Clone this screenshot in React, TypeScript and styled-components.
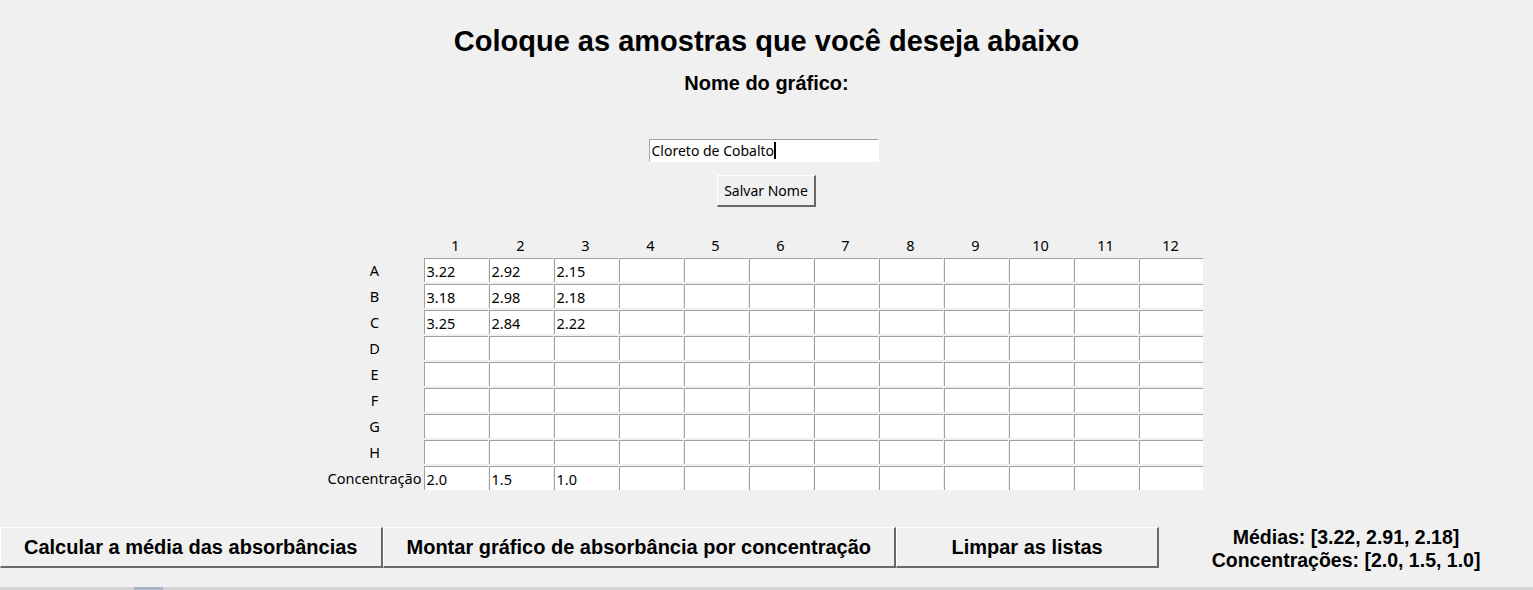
import * as React from 'react';
import styled, { createGlobalStyle } from 'styled-components';

const GlobalStyle = createGlobalStyle`
  html, body {
    margin: 0;
    padding: 0;
    background: #f0f0f0;
  }
`

const Window = styled.div`
  height: 590px;
  display: flex;
  flex-direction: column;
  align-items: center;
  background: #f0f0f0;
  overflow: hidden;
  font-family: "Liberation Sans", Arial, sans-serif;
  color: #000;
`

const Title = styled.h1`
  margin: 24px 0 0 0;
  font-size: 29px;
  line-height: 34px;
  font-weight: bold;
`

const Subtitle = styled.div`
  margin-top: 13px;
  font-size: 20px;
  line-height: 24px;
  font-weight: bold;
`

const NameField = styled.div`
  margin-top: 44px;
  margin-right: 6px;
  width: 230px;
  height: 23px;
  box-sizing: border-box;
  background: #fff;
  border-top: 1px solid #a0a0a0;
  border-left: 1px solid #a0a0a0;
  border-right: 1px solid #fff;
  border-bottom: 1px solid #fff;
  padding-left: 2px;
  display: flex;
  align-items: center;
  font-family: "Noto Sans", "Open Sans", sans-serif;
  font-size: 14px;

  i {
    display: inline-block;
    width: 2px;
    height: 17px;
    background: #000;
  }
`

const SaveButton = styled.button`
  margin-top: 13px;
  width: 99px;
  height: 32px;
  box-sizing: border-box;
  background: #f0f0f0;
  border-style: solid;
  border-width: 1px 2px 2px 1px;
  border-color: #fff #696969 #696969 #fff;
  font-family: "Noto Sans", "Open Sans", sans-serif;
  font-size: 14px;
  color: #000;
  padding: 0;
`

const Plate = styled.div`
  margin-top: 26px;
  margin-right: 4px;
  display: grid;
  grid-template-columns: 96px repeat(12, 64px);
  grid-auto-rows: 24px;
  grid-template-rows: 23px;
  column-gap: 1px;
  row-gap: 2px;
  font-family: "Noto Sans", "Open Sans", sans-serif;
  font-size: 14.5px;
`

const HeadLabel = styled.div`
  display: flex;
  align-items: center;
  justify-content: center;
  white-space: nowrap;
`

const Cell = styled.div`
  box-sizing: border-box;
  background: #fff;
  border-top: 1px solid #a0a0a0;
  border-left: 1px solid #a0a0a0;
  padding-left: 2px;
  display: flex;
  align-items: center;
`

const ActionBar = styled.div`
  margin-top: auto;
  align-self: stretch;
  height: 41px;
  display: flex;
`

const ActionButton = styled.button<{ $width?: number }>`
  height: 41px;
  box-sizing: border-box;
  ${props => props.$width ? `width: ${props.$width}px;` : ''}
  padding: 0 23px;
  background: #f0f0f0;
  border-style: solid;
  border-width: 1px 2px 2px 1px;
  border-color: #fff #696969 #696969 #fff;
  font-family: "Liberation Sans", Arial, sans-serif;
  font-size: 20px;
  font-weight: bold;
  color: #000;
  white-space: nowrap;
`

const Results = styled.div`
  flex: 1;
  display: flex;
  flex-direction: column;
  align-items: center;
  justify-content: center;
  font-size: 19.5px;
  line-height: 23px;
  font-weight: bold;
  margin-top: 2px;
`

const Taskbar = styled.div`
  margin-top: 19px;
  align-self: stretch;
  height: 3px;
  background: #d4d4d4;
  position: relative;
  flex-shrink: 0;

  span {
    position: absolute;
    left: 134px;
    top: 0;
    width: 29px;
    height: 3px;
    background: #a9b6c8;
  }
`

const rows = ['A', 'B', 'C', 'D', 'E', 'F', 'G', 'H']
const values: Record<string, string[]> = {
  A: ['3.22', '2.92', '2.15'],
  B: ['3.18', '2.98', '2.18'],
  C: ['3.25', '2.84', '2.22'],
  'Concentração': ['2.0', '1.5', '1.0'],
}
const cols = Array.from({ length: 12 }, (_, i) => i + 1)

class App extends React.Component {
  renderRow(label: string) {
    const data = values[label] || []
    return (
      <React.Fragment key={label}>
        <HeadLabel>{label}</HeadLabel>
        {cols.map(c => (
          <Cell key={c}>{data[c - 1] || ''}</Cell>
        ))}
      </React.Fragment>
    )
  }

  render() {
    return (
      <Window>
        <GlobalStyle />
        <Title>Coloque as amostras que você deseja abaixo</Title>
        <Subtitle>Nome do gráfico:</Subtitle>
        <NameField>Cloreto de Cobalto<i /></NameField>
        <SaveButton>Salvar Nome</SaveButton>
        <Plate>
          <HeadLabel />
          {cols.map(c => <HeadLabel key={c}>{c}</HeadLabel>)}
          {rows.map(r => this.renderRow(r))}
          {this.renderRow('Concentração')}
        </Plate>
        <ActionBar>
          <ActionButton>Calcular a média das absorbâncias</ActionButton>
          <ActionButton>Montar gráfico de absorbância por concentração</ActionButton>
          <ActionButton $width={263}>Limpar as listas</ActionButton>
          <Results>
            <div>Médias: [3.22, 2.91, 2.18]</div>
            <div>Concentrações: [2.0, 1.5, 1.0]</div>
          </Results>
        </ActionBar>
        <Taskbar><span /></Taskbar>
      </Window>
    );
  }
}

export default App;
